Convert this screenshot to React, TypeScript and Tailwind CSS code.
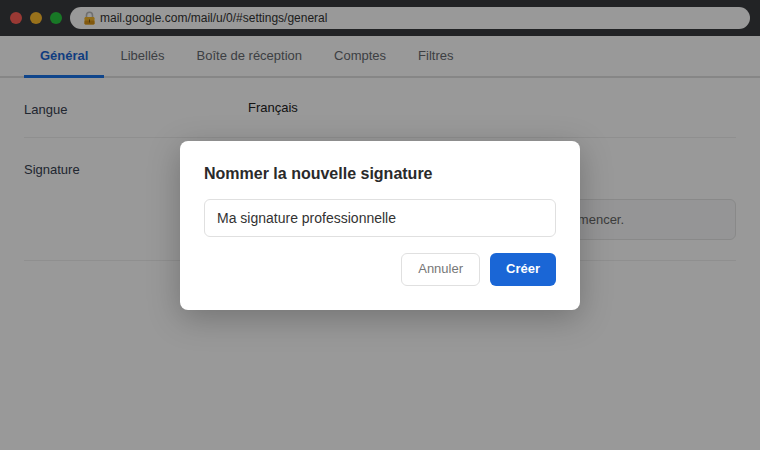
import React from "react";

const tabs = ["Libellés", "Boîte de réception", "Comptes", "Filtres"];

const LockIcon = () => (
  <svg width="13" height="14" viewBox="0 0 13 14" className="shrink-0">
    <path d="M3.5 6.5V4.2a3 3 0 0 1 6 0v2.3" fill="none" stroke="#b9b9b9" strokeWidth="1.6" />
    <rect x="1.5" y="6" width="10" height="7.5" rx="1.2" fill="#f4b62c" />
    <rect x="1.5" y="9.5" width="10" height="4" rx="1.2" fill="#d8931a" />
    <rect x="6" y="8.5" width="1" height="3" fill="#7a5a10" />
  </svg>
);

export default function App() {
  return (
    <div className="relative h-[450px] w-[760px] overflow-hidden bg-white font-['Liberation_Sans',sans-serif] text-[13px]">
      {/* Browser chrome */}
      <div className="flex h-9 items-center bg-[#3a3b3f] pb-[1px] pl-2.5 pr-2.5">
        <div className="flex gap-2">
          <span className="size-3 rounded-full bg-[#ff5f57]" />
          <span className="size-3 rounded-full bg-[#febc2e]" />
          <span className="size-3 rounded-full bg-[#28c840]" />
        </div>
        <div className="ml-2 flex h-[22px] flex-1 items-center gap-1 rounded-full bg-white pl-[13px] text-[12px] text-[#333333]">
          <LockIcon />
          <span>mail.google.com/mail/u/0/#settings/general</span>
        </div>
      </div>

      {/* Tabs */}
      <div className="flex h-[42px] border-b-2 border-[#e0e0e0] px-6">
        <div className="-mb-[2px] flex h-[42px] items-center border-b-[3px] border-[#1a73e8] px-4 pt-[1px] font-bold text-[#1a66d6]">
          Général
        </div>
        {tabs.map((tab) => (
          <div key={tab} className="flex items-center px-4 text-[#666a70]">
            {tab}
          </div>
        ))}
      </div>

      {/* Settings rows */}
      <div className="px-6">
        <div className="flex h-[60px] border-b border-[#eeeeee] pt-[22px] text-[#374151]">
          <div className="w-[224px]">Langue</div>
          <div className="-mt-[2px] text-[#222222]">Français</div>
        </div>
        <div className="flex h-[123px] border-b border-[#eeeeee] pt-[22px] text-[#374151]">
          <div className="w-[224px]">Signature</div>
          <div className="flex-1 pt-[39px]">
            <div className="flex h-[41px] items-center rounded-md border border-[#e5e5e5] bg-[#f8f9fa] pl-3 text-[#666666]">
              Aucune signature pour l'heure. Créez-en une pour commencer.
            </div>
          </div>
        </div>
      </div>

      {/* Name dialog */}
      <div className="absolute inset-0 flex items-center justify-center bg-black/40">
        <div className="w-[400px] rounded-lg bg-white px-6 pb-6 pt-[21px] shadow-[0_8px_32px_rgba(0,0,0,0.25)]">
          <h2 className="text-base font-bold leading-6 text-[#2a2a2a]">Nommer la nouvelle signature</h2>
          <div className="mt-[13px] flex h-[38px] items-center rounded-md border border-[#e0e0e0] px-3 text-sm text-[#333333]">
            Ma signature professionnelle
          </div>
          <div className="mt-4 flex justify-end gap-2.5">
            <button className="h-[33px] rounded-md border border-[#e0e0e0] bg-white px-4 text-[13px] text-[#777777]">
              Annuler
            </button>
            <button className="h-[33px] rounded-md bg-[#1a66d6] px-4 text-[13px] font-bold text-white">
              Créer
            </button>
          </div>
        </div>
      </div>
    </div>
  );
}
